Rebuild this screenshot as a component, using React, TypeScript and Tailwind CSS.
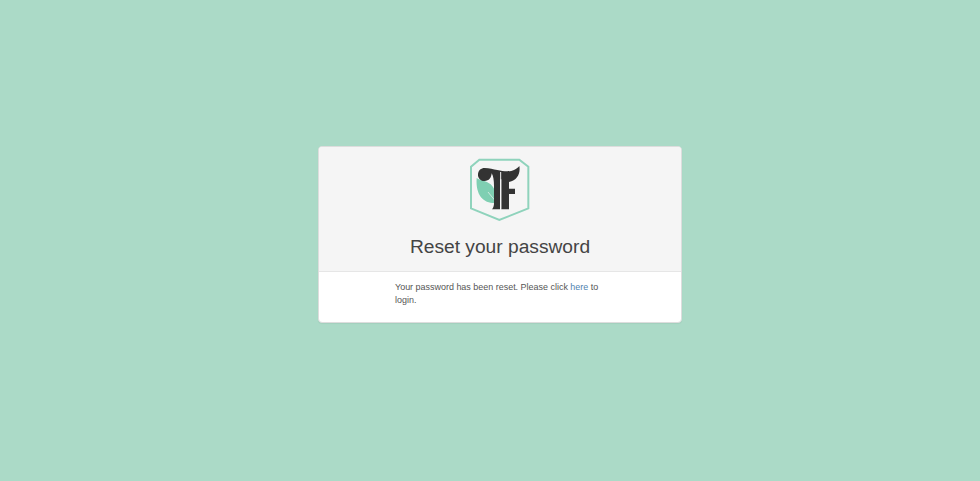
export default function App() {
  return (
    <div className="min-h-screen bg-[#abdac7] pt-[146px] pl-[318px] font-['Liberation_Sans',Arial,sans-serif]">
      <div className="w-[364px] overflow-hidden rounded border border-[#dddddd] bg-white shadow-[0_1px_1px_rgba(0,0,0,0.05)]">
        <div className="h-[125px] border-b border-[#e6e6e6] bg-[#f5f5f5] pt-[3px] text-center">
          <svg viewBox="0 0 240 240" className="mx-auto block h-[80px] w-[80px]">
            <path d="M58 29 H178 L205 50 V175 L118 210 L33 175 V50 Z" fill="none" stroke="#8fd3bc" strokeWidth="6" />
            <path d="M50 84 C62 94 92 90 104 120 C111 138 112 150 110 159 C74 162 46 140 50 84 Z" fill="#7fcfb2" />
            <path d="M84 126 C92 136 100 146 110 157" fill="none" stroke="#f5f5f5" strokeWidth="2" />
            <path d="M74 54 C88 54 100 58 112 60 C130 64 150 66 162 60 C170 56 175 52 178 48 C182 70 172 92 147 96 V116 H165 V132 H147 V178 H124 V88 H120 V178 H96 C101 172 102 166 102 158 V108 C102 92 100 78 95 70 C94 84 86 94 72 93 C60 92 53 82 54 72 C55 61 63 54 74 54 Z" fill="#333333" />
            <path d="M122 66 V176" fill="none" stroke="#f5f5f5" strokeWidth="3" />
          </svg>
          <h1 className="mt-[6px] text-[19.2px] leading-[22px] font-normal text-[#444444]">Reset your password</h1>
        </div>
        <div className="h-[50px] pt-[9px] pl-[76px] pr-[80px] text-[8.96px] leading-[12.8px] text-[#555555]">
          Your password has been reset. Please click <a href="#" className="text-[#4f82b0]">here</a> to login.
        </div>
      </div>
    </div>
  )
}
